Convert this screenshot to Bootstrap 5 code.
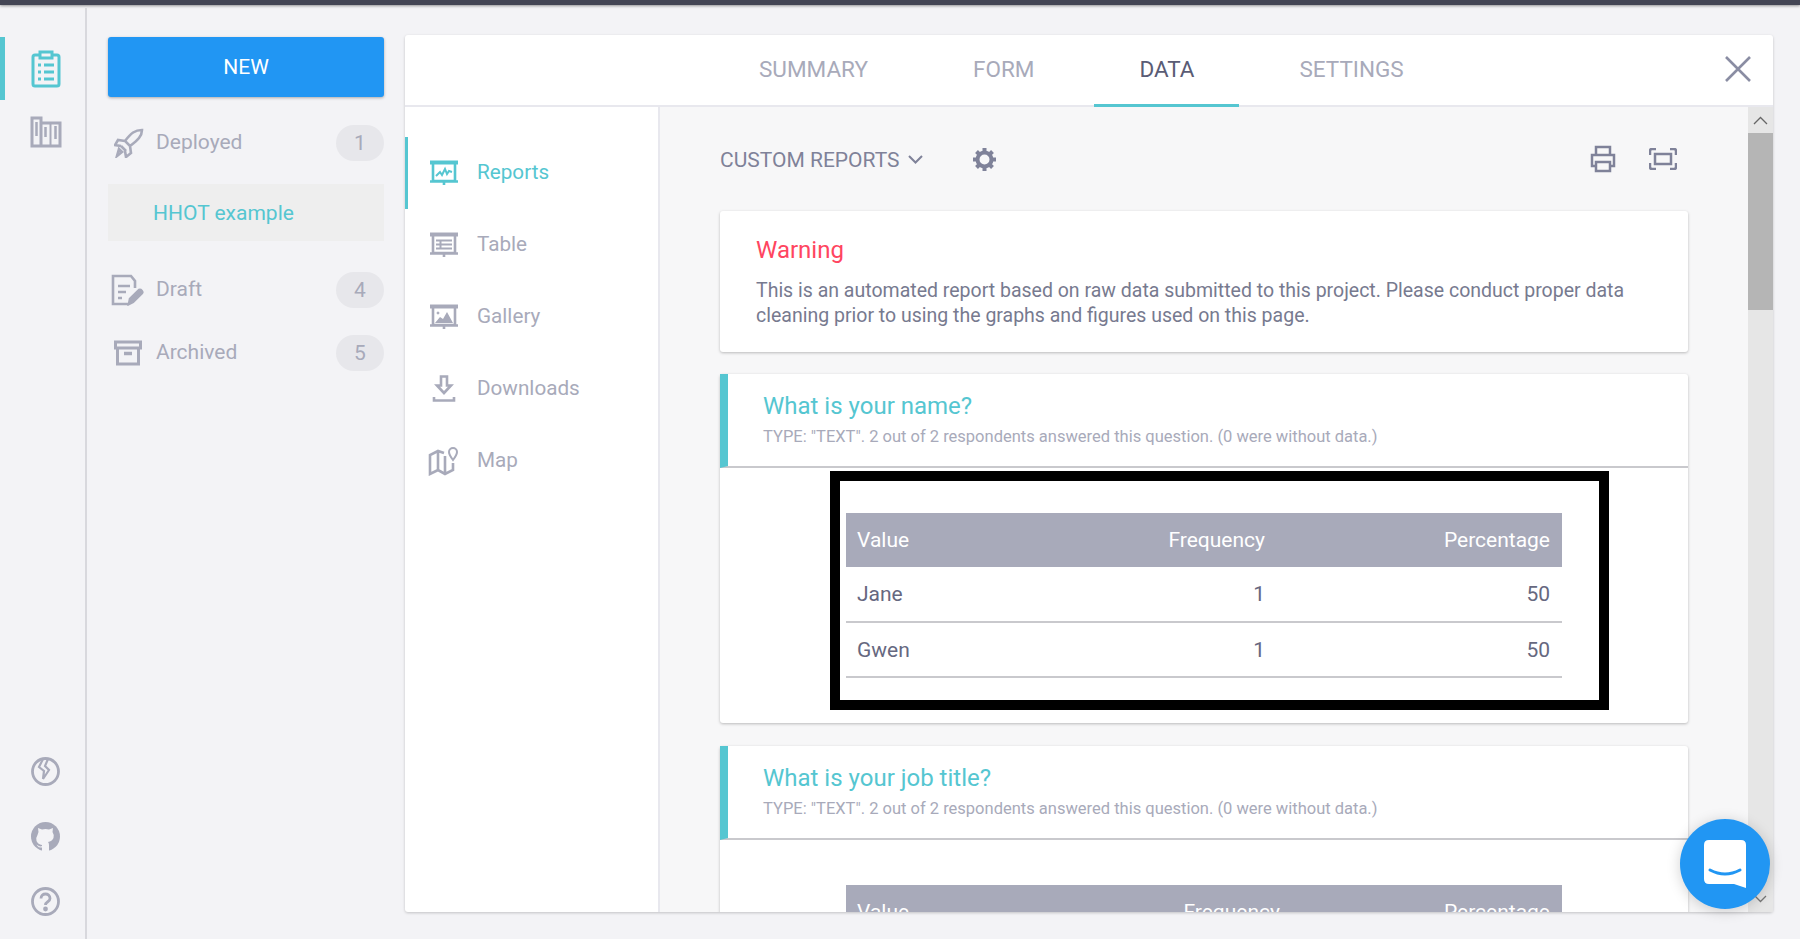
<!DOCTYPE html>
<html lang="en">
<head>
    <meta charset="UTF-8">
    <meta name="viewport" content="width=device-width, initial-scale=1.0">
    <title>Project Data</title>
    <link href="https://cdn.jsdelivr.net/npm/bootstrap@5.3.0/dist/css/bootstrap.min.css" rel="stylesheet">
    <style>
        html, body { height: 100%; overflow: hidden; }
        body { font-family: Roboto, "Liberation Sans", sans-serif; font-size: 21px; background: #f3f3f6; color: #a8aaba; }
        svg { display: block; fill: none; stroke: currentColor; flex: none; }
        .topline { height: 5px; background: #434555; box-shadow: 0 1px 3px rgba(0,0,0,.4); flex: none; }
        .shell { height: 934px; }
        .rail { width: 87px; margin-top: 3px; border-right: 2px solid #d8d8dd; padding: 29px 0 20px; flex: none; }
        .rail-item { height: 63px; padding-left: 6px; color: #a8aaba; }
        .rail-item.on { color: #55c6d1; border-left: 5px solid #55c6d1; padding-left: 1px; }
        .rail-foot { gap: 36px; padding: 0 0 3px 6px; }
        .projects { width: 276px; margin: 32px 21px 0; flex: none; }
        .btn-new { height: 60px; padding-top: 8px; background: #2196f3; border: 0; border-radius: 3px; color: #fff; font-size: 21px; box-shadow: 0 1px 3px rgba(0,0,0,.3); }
        .project-row { height: 36px; }
        .project-row > span:not(.badge) { margin-top: -1px; }
        .project-ico { width: 48px; padding-left: 6px; }
        .project-ico.nudge { padding-left: 3px; }
        .count { width: 48px; height: 36px; line-height: 36px; padding: 0; font-size: 21px; font-weight: 400; background: #e7e7eb; color: #a8aaba; }
        .project-sel { height: 57px; margin: 23px 0 31px; padding: 2px 0 0 45px; background: #eee; color: #55c6d1; }
        .archived-row { margin-top: 27px; }
        .panel { width: 1368px; height: 877px; margin-top: 30px; background: #fff; border-radius: 3px; box-shadow: 0 1px 3px rgba(0,0,0,.2); flex: none; }
        .tabbar { height: 72px; border-bottom: 2px solid #e8e8ee; padding-left: 309px; flex: none; }
        .tabitem { padding: 0 45px; margin-right: 15px; height: 72px; line-height: 69px; font-size: 22.5px; color: #a8aaba; border-bottom: 3px solid transparent; text-decoration: none; }
        .tabitem.on { color: #5a5c75; border-bottom-color: #55c6d1; }
        .close-x { right: 22px; top: 21px; color: #8a8da3; }
        .sidenav { width: 255px; border-right: 2px solid #e8e8ee; padding-top: 30px; font-size: 20.7px; flex: none; }
        .side-item { height: 72px; gap: 19px; padding-left: 25px; color: #a8aaba; }
        .side-item.on { color: #55c6d1; border-left: 3px solid #55c6d1; padding-left: 22px; }
        .map-ico { margin-left: -2px; }
        .content { width: 1088px; background: #f7f7f8; padding: 0 60px; overflow: hidden; flex: none; }
        .toolbar { height: 104px; color: #7f8299; flex: none; }
        .toolbar-label { margin-top: 3px; }
        .sheet { background: #fff; border-radius: 3px; box-shadow: 0 1px 3px rgba(0,0,0,.25); flex: none; margin-bottom: 22px; }
        .sheet.first-q { margin-bottom: 23px; }
        .warn { height: 141px; padding: 20px 36px; line-height: 25px; font-size: 19.5px; color: #777a8f; }
        .warn h5 { font-size: 24px; font-weight: 400; color: #ff4560; margin: 5px 0 14px; line-height: 28px; }
        .qhead { height: 94px; border-left: 8px solid #55c6d1; border-bottom: 2px solid #c9c9cd; padding: 17px 0 0 35px; }
        .qhead h5 { font-size: 24px; font-weight: 400; color: #55c6d1; margin: 0; line-height: 30px; }
        .qhead div { font-size: 16.5px; color: #a8aaba; line-height: 24px; margin-top: 4px; }
        .qbody { height: 255px; padding: 3px 0 0 110px; }
        .blackbox { width: 779px; height: 239px; border: 10px solid #000; padding: 32px 0 0 6px; }
        .freq { width: 716px; margin: 0; font-size: 21px; table-layout: fixed; }
        .freq th { background: #a8aaba; color: #fff; font-weight: 400; height: 54px; padding: 2px 12px 0; vertical-align: middle; border: 0; }
        .freq td { height: 55px; padding: 2px 12px 0; vertical-align: middle; color: #666880; border-bottom: 2px solid #c9c9cd; }
        .freq th:first-child, .freq td:first-child { padding-left: 11px; }
        .plainbox { padding: 45px 0 0 126px; }
        .scrolly { width: 25px; background: #e6e6e6; flex: none; }
        .scroll-up { height: 26px; color: #666; }
        .scroll-thumb { height: 177px; background: #b5b5b5; }
        .scroll-down { color: #777; padding-bottom: 9px; }
        .chat { position: fixed; left: 1680px; top: 819px; width: 90px; height: 90px; background: #2196f3; box-shadow: 0 2px 14px rgba(0,0,0,.18); }
    </style>
</head>
<body>
<div class="topline"></div>
<div class="shell d-flex">
    <!-- Far left rail -->
    <div class="rail d-flex flex-column">
        <div class="rail-item on d-flex align-items-center justify-content-center">
            <svg width="30" height="38" viewBox="0 0 30 38"><rect x="2" y="5" width="26" height="31" rx="2" stroke-width="3"/><rect x="9" y="2" width="12" height="6" fill="#f3f3f6" stroke-width="3"/><path d="M7 15h3M13 15h10M7 22h3M13 22h10M7 29h3M13 29h10" stroke-width="3"/></svg>
        </div>
        <div class="rail-item d-flex align-items-center justify-content-center">
            <svg width="32" height="32" viewBox="0 0 32 32" stroke-width="3"><path d="M2 2h9v28H2zM11 7h19v23H11"/><path d="M6.500 6v14M15.500 11v10M25.500 10v13" stroke-width="2.500"/><path d="M20.500 7v23" stroke-width="2"/></svg>
        </div>
        <div class="rail-foot mt-auto d-flex flex-column align-items-center">
            <svg width="29" height="29" viewBox="0 0 29 29" stroke-width="2.800"><circle cx="14.500" cy="14.500" r="13"/><path d="M12 2L8 10l5 4-1 8 6-9-4-4 3-7" stroke-width="2.200"/></svg>
            <svg width="29" height="29" viewBox="0 0 29 29" style="stroke:none"><circle cx="14.500" cy="14.500" r="14.500" fill="#a8aaba"/><path d="M7.500 10L7 6l4 1.500q3.500-1 7 0L22 6l-.500 4q2 3 1 6-1.500 3.500-5.500 4 1 1 1 3v6h-7v-3.500q-3 .500-4.500-1.500l-1-1.500 1.500 1q2.500 1.500 4 .500v-1q-4-.500-5.500-4-1-3 1-6z" fill="#f3f3f6"/></svg>
            <svg width="29" height="29" viewBox="0 0 29 29" stroke-width="2.800"><circle cx="14.500" cy="14.500" r="13"/><path d="M10 11.500c0-6 9-6 9 0 0 3.500-4.500 3-4.500 6.500"/><circle cx="14.500" cy="22" r="1" fill="currentColor"/></svg>
        </div>
    </div>

    <!-- Projects column -->
    <div class="projects">
        <button type="button" class="btn btn-primary btn-new w-100 mb-4">NEW</button>
        <div class="project-row d-flex align-items-center mt-1">
            <div class="project-ico">
                <svg width="30" height="30" viewBox="0 0 30 30" stroke-width="2.600"><path d="M28 2c-7 0-11 3-17 11l5 5c8-6 12-10 12-16zM11 13l-7-1-3 5 6 1M16 18l1 7-5 4-1-6M7 18l5 5M3 28l5-4-3-3z"/></svg>
            </div>
            <span>Deployed</span>
            <span class="badge rounded-pill count ms-auto">1</span>
        </div>
        <div class="project-sel d-flex align-items-center">HHOT example</div>
        <div class="project-row d-flex align-items-center">
            <div class="project-ico nudge">
                <svg width="33" height="32" viewBox="0 0 33 32" stroke-width="2.600"><path d="M17 30H2V2h18l4 5v7M7 12h12M7 18h8M7 24h4"/><path d="M18 30l1-5 9-9c2-1 4 2 3 3l-9 9z" fill="currentColor"/></svg>
            </div>
            <span>Draft</span>
            <span class="badge rounded-pill count ms-auto">4</span>
        </div>
        <div class="project-row archived-row d-flex align-items-center">
            <div class="project-ico">
                <svg width="28" height="26" viewBox="0 0 28 26" stroke-width="3"><path d="M1.500 2h25v6h-25zM3.500 8v16h21V8"/><path d="M10 13.500h8" stroke-width="3.500"/></svg>
            </div>
            <span>Archived</span>
            <span class="badge rounded-pill count ms-auto">5</span>
        </div>
    </div>

    <!-- Main panel -->
    <div class="panel d-flex flex-column position-relative">
        <div class="tabbar nav">
            <a class="tabitem" href="#">SUMMARY</a>
            <a class="tabitem" href="#">FORM</a>
            <a class="tabitem on" href="#">DATA</a>
            <a class="tabitem" href="#">SETTINGS</a>
        </div>
        <svg class="close-x position-absolute" width="26" height="26" viewBox="0 0 26 26" stroke-width="2.600"><path d="M1 1l24 24M25 1L1 25"/></svg>

        <div class="d-flex flex-grow-1 overflow-hidden">
            <div class="sidenav">
                <div class="side-item on d-flex align-items-center">
                    <svg width="28" height="26" viewBox="0 0 28 26" stroke-width="2.600"><path d="M0 2.500h28" stroke-width="4"/><path d="M3 3v18h22V3M0 21.500h28M14 21v4"/><path d="M6 16l4-4 2 3 3-6 2 5 2-3 3 1" stroke-width="2"/></svg>
                    <span>Reports</span>
                </div>
                <div class="side-item d-flex align-items-center">
                    <svg width="28" height="26" viewBox="0 0 28 26" stroke-width="2.600"><path d="M0 2.500h28" stroke-width="4"/><path d="M3 3v18h22V3M0 21.500h28M14 21v4"/><path d="M6 8.500h16M6 12.500h16M6 16.500h16M10.500 8v9" stroke-width="2"/></svg>
                    <span>Table</span>
                </div>
                <div class="side-item d-flex align-items-center">
                    <svg width="28" height="26" viewBox="0 0 28 26" stroke-width="2.600"><path d="M0 2.500h28" stroke-width="4"/><path d="M3 3v18h22V3M0 21.500h28M14 21v4"/><path d="M5 19l5-6 3 2 4-7 6 11z" fill="currentColor" stroke="none"/><circle cx="8" cy="9" r="1" fill="currentColor" stroke-width="1"/></svg>
                    <span>Gallery</span>
                </div>
                <div class="side-item d-flex align-items-center">
                    <svg width="28" height="28" viewBox="0 0 28 28" stroke-width="2.600"><path d="M11 1.500h6v9h4l-7 7.500-7-7.500h4zM4 22v3.500h20V22"/></svg>
                    <span>Downloads</span>
                </div>
                <div class="side-item d-flex align-items-center">
                    <svg class="map-ico" width="30" height="30" viewBox="0 0 30 30" stroke-width="2.600"><path d="M16 7l-6-2-8 4v19l8-4 7 4 8-4v-7M10 5v19M17 10v18"/><path d="M25 14c-3-4-4-6-4-8a4 4 0 0 1 8 0c0 2-1 4-4 8z" stroke-width="2"/></svg>
                    <span>Map</span>
                </div>
            </div>

            <div class="content d-flex flex-column">
                <div class="toolbar d-flex align-items-center">
                    <span class="toolbar-label">CUSTOM REPORTS</span>
                    <svg class="ms-2" width="15" height="9" viewBox="0 0 15 9" stroke-width="2"><path d="M1 1l6.500 6.500L14 1"/></svg>
                    <svg style="margin-left:49px" width="25" height="25" viewBox="0 0 25 25" stroke-width="4"><circle cx="12.500" cy="12.500" r="7"/><path d="M12.500 1v4M12.500 20v4M1 12.500h4M20 12.500h4M4.500 4.500l3 3M17.500 17.500l3 3M20.500 4.500l-3 3M7.500 17.500l-3 3"/></svg>
                    <svg class="ms-auto" width="26" height="28" viewBox="0 0 26 28" stroke-width="2.500"><path d="M6 10V2h14v8M6 21H2V10h22v11h-4M6 17h14v9H6z"/></svg>
                    <svg style="margin:0 11px 0 33px" width="28" height="22" viewBox="0 0 28 22" stroke-width="2.500"><path d="M1 7V3q0-2 2-2h4M21 1h4q2 0 2 2v4M27 15v4q0 2-2 2h-4M7 21H3q-2 0-2-2v-4"/><rect x="6" y="6" width="16" height="10"/></svg>
                </div>

                <div class="sheet warn">
                    <h5>Warning</h5>
                    This is an automated report based on raw data submitted to this project. Please conduct proper data cleaning prior to using the graphs and figures used on this page.
                </div>

                <div class="sheet first-q">
                    <div class="qhead">
                        <h5>What is your name?</h5>
                        <div>TYPE: "TEXT". 2 out of 2 respondents answered this question. (0 were without data.)</div>
                    </div>
                    <div class="qbody">
                        <div class="blackbox">
                            <table class="table freq">
                                <thead><tr><th>Value</th><th class="text-end" style="width:185px">Frequency</th><th class="text-end" style="width:285px">Percentage</th></tr></thead>
                                <tbody>
                                    <tr><td>Jane</td><td class="text-end">1</td><td class="text-end">50</td></tr>
                                    <tr><td>Gwen</td><td class="text-end">1</td><td class="text-end">50</td></tr>
                                </tbody>
                            </table>
                        </div>
                    </div>
                </div>

                <div class="sheet">
                    <div class="qhead">
                        <h5>What is your job title?</h5>
                        <div>TYPE: "TEXT". 2 out of 2 respondents answered this question. (0 were without data.)</div>
                    </div>
                    <div class="plainbox">
                        <table class="table freq">
                            <thead><tr><th>Value</th><th class="text-end" style="width:200px">Frequency</th><th class="text-end" style="width:270px">Percentage</th></tr></thead>
                        </table>
                    </div>
                </div>
            </div>

            <div class="scrolly d-flex flex-column">
                <div class="scroll-up d-flex align-items-center justify-content-center">
                    <svg width="15" height="9" viewBox="0 0 15 9" stroke-width="1.300"><path d="M1 8l6.500-6.500L14 8"/></svg>
                </div>
                <div class="scroll-thumb"></div>
                <div class="scroll-down mt-auto d-flex justify-content-center">
                    <svg width="13" height="8" viewBox="0 0 13 8" stroke-width="1.300"><path d="M1 1l5.500 5.500L12 1"/></svg>
                </div>
            </div>
        </div>
    </div>
</div>

<!-- Chat bubble -->
<div class="chat rounded-circle d-flex align-items-center justify-content-center">
    <svg width="42" height="48" viewBox="0 0 42 48" style="stroke:none;fill:#fff"><path d="M5 0h32q5 0 5 5v43l-12-4H5q-5 0-5-5V5q0-5 5-5z"/><path d="M6 30q15 8 30 0" stroke="#2196f3" stroke-width="3" fill="none" stroke-linecap="round"/></svg>
</div>
</body>
</html>
